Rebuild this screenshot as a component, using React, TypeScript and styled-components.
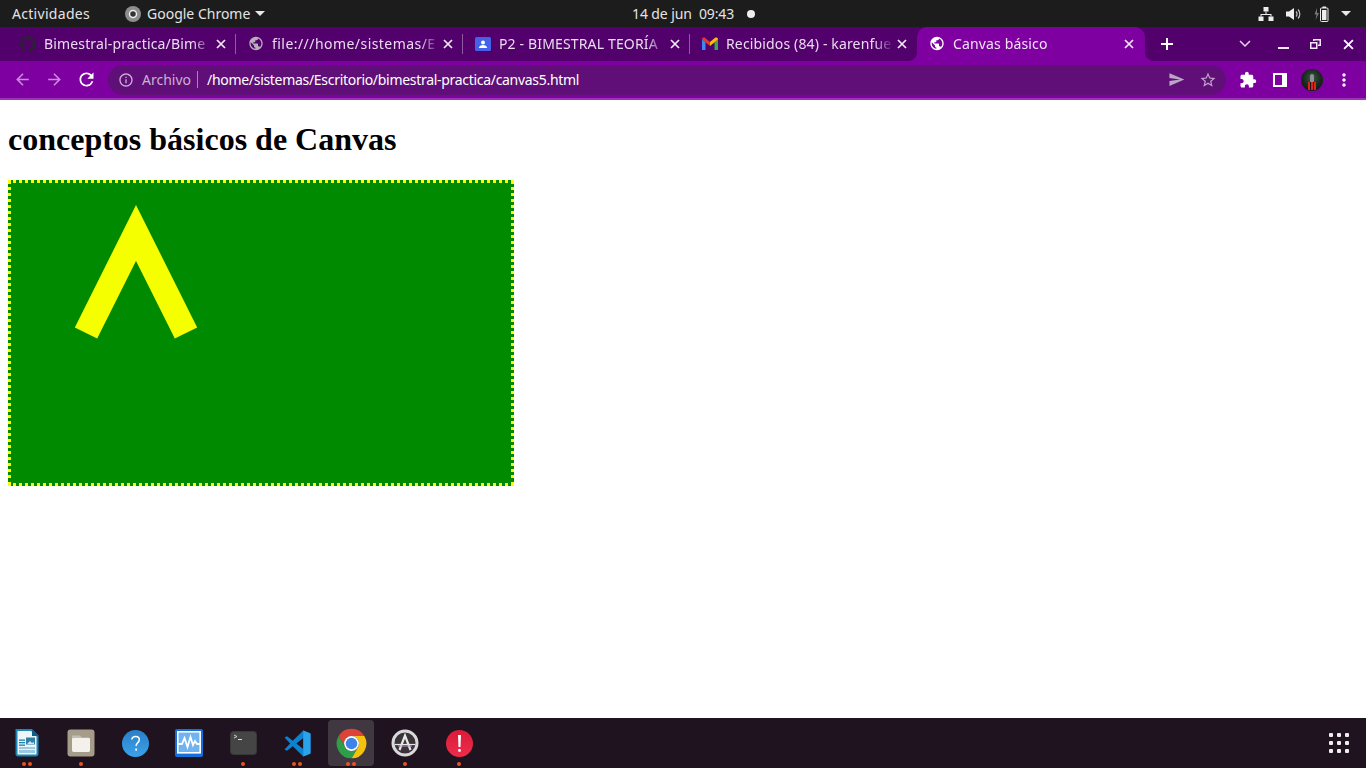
import { FC, ReactNode } from "react";
import styled, { createGlobalStyle } from "styled-components";
import { FaGithub } from "react-icons/fa";
import {
  MdArrowBack,
  MdArrowForward,
  MdExtension,
  MdInfoOutline,
  MdMoreVert,
  MdPublic,
  MdRefresh,
  MdSend,
  MdStarBorder,
} from "react-icons/md";

const UI_FONT = `"Noto Sans", "Open Sans", sans-serif`;

const GlobalStyle = createGlobalStyle`
  html, body {
    margin: 0;
    padding: 0;
    background: #fff;
  }
  * {
    box-sizing: border-box;
  }
`;

const Screen = styled.div`
  width: 1366px;
  height: 768px;
  display: flex;
  flex-direction: column;
  overflow: hidden;
  font-family: ${UI_FONT};
`;

/* gnome top bar */
const TopBar = styled.div`
  height: 27px;
  flex: none;
  background: #1c1c1c;
  color: #e4e4e4;
  font-size: 14px;
  display: grid;
  grid-template-columns: 620px 1fr auto;
  align-items: center;
  padding-left: 12px;
`;

const TopGroup = styled.div`
  display: flex;
  align-items: center;
`;

const Activities = styled.span`
  width: 113px;
  letter-spacing: 0.3px;
`;

const AppName = styled.span`
  margin-left: 6px;
`;

const Caret = styled.span<{ $left: number }>`
  width: 0;
  height: 0;
  margin-left: ${(p) => p.$left}px;
  border-left: 5px solid transparent;
  border-right: 5px solid transparent;
  border-top: 5px solid #e8e8e8;
`;

const Clock = styled.span`
  letter-spacing: -0.1px;
`;

const NotifyDot = styled.span`
  width: 8px;
  height: 8px;
  margin-left: 13px;
  border-radius: 50%;
  background: #eee;
`;

const Tray = styled.div`
  display: flex;
  align-items: center;
  gap: 12px;
  padding-right: 15px;
`;

/* chrome tab strip */
const TabStrip = styled.div`
  height: 34px;
  flex: none;
  background: #52006c;
  display: flex;
  align-items: stretch;
  padding-left: 9px;
  color: #e9dcee;
`;

const Tab = styled.div<{ $last?: boolean }>`
  position: relative;
  width: 227px;
  display: flex;
  align-items: center;
  padding: 0 10px 1px 12px;
  font-size: 14px;
  letter-spacing: 0.15px;
  color: #e9dcee;
  &:first-child {
    padding-left: 11px;
  }
  &::after {
    content: "";
    display: ${(p) => (p.$last ? "none" : "block")};
    position: absolute;
    right: 0;
    top: 7px;
    bottom: 7px;
    width: 1px;
    background: #8f5ba3;
  }
`;

const ActiveTab = styled.div`
  position: relative;
  width: 228px;
  display: flex;
  align-items: center;
  padding: 0 11px 1px 12px;
  font-size: 14px;
  letter-spacing: 0.15px;
  color: #f1e2f5;
  background: #7f00a1;
  border-radius: 10px 10px 0 0;
  &::before,
  &::after {
    content: "";
    position: absolute;
    bottom: 0;
    width: 8px;
    height: 8px;
  }
  &::before {
    left: -8px;
    background: radial-gradient(circle at 0 0, transparent 7.5px, #7f00a1 8px);
  }
  &::after {
    right: -8px;
    background: radial-gradient(circle at 100% 0, transparent 7.5px, #7f00a1 8px);
  }
`;

const TabIcon = styled.span`
  width: 16px;
  height: 16px;
  flex: none;
  display: flex;
  align-items: center;
  justify-content: center;
`;

const TabTitle = styled.span<{ $spread?: number }>`
  flex: 1;
  margin-left: 8px;
  white-space: nowrap;
  letter-spacing: ${(p) => p.$spread ?? 0.15}px;
  -webkit-mask-image: linear-gradient(90deg, #000 88%, transparent 100%);
  mask-image: linear-gradient(90deg, #000 88%, transparent 100%);
`;

const TabClose = styled.span`
  width: 10px;
  flex: none;
  margin-left: 3px;
  display: flex;
  color: #f4ecf7;
`;

const StripControls = styled.div`
  flex: 1;
  display: flex;
  align-items: center;
  color: #fff;
`;

const StripButton = styled.span<{ $width?: number; $gap?: number }>`
  width: ${(p) => p.$width ?? 32}px;
  margin-left: ${(p) => p.$gap ?? 0}px;
  display: flex;
  justify-content: center;
`;

/* chrome toolbar */
const Toolbar = styled.div`
  height: 39px;
  flex: none;
  background: #7f00a1;
  border-bottom: 2px solid #9a35b3;
  display: flex;
  align-items: center;
  padding: 0 0 0 6px;
  color: #fff;
`;

const NavButton = styled.span<{ $dim?: boolean }>`
  width: 32px;
  display: flex;
  justify-content: center;
  color: ${(p) => (p.$dim ? "#c68dd6" : "#fff")};
`;

const Omnibox = styled.div`
  width: 1118px;
  height: 30px;
  margin-left: 6px;
  margin-right: 6px;
  border-radius: 15px;
  background: #600f78;
  display: flex;
  align-items: center;
  padding: 0 2px 0 10px;
  font-size: 14px;
`;

const OriginLabel = styled.span`
  margin-left: 8px;
  color: #c9b2d2;
  padding-right: 6px;
  border-right: 1px solid #a987b5;
  line-height: 17px;
`;

const UrlText = styled.span`
  margin-left: 9px;
  color: #fff;
  flex: 1;
  letter-spacing: -0.3px;
`;

const OmniAction = styled.span`
  width: 32px;
  display: flex;
  justify-content: center;
  color: #bda5c6;
`;

const ToolButton = styled.span`
  width: 32px;
  display: flex;
  justify-content: center;
  align-items: center;
  color: #fff;
`;

const SidePanelIcon = styled.span`
  width: 14px;
  height: 14px;
  border: 2px solid #fff;
  border-right-width: 5px;
`;

const Avatar = styled.span`
  width: 22px;
  height: 22px;
  border-radius: 50%;
  background: radial-gradient(circle at 50% 40%, #3f5548 0%, #1a2a20 50%, #0c0c0c 100%);
  position: relative;
  overflow: hidden;
  &::before {
    content: "";
    position: absolute;
    left: 9px;
    top: 5px;
    width: 4px;
    height: 9px;
    border-radius: 2px;
    background: #8b9590;
  }
  &::after {
    content: "";
    position: absolute;
    left: 7px;
    bottom: 1px;
    width: 8px;
    height: 8px;
    background: repeating-linear-gradient(90deg, #d8261c 0 2px, #20100f 2px 3px);
  }
`;

/* page */
const Page = styled.main`
  flex: 1;
  background: #fff;
  padding: 0 8px;
  overflow: hidden;
`;

const Heading = styled.h1`
  margin: 21.44px 0;
  font: bold 32px/37px "Liberation Serif", "Times New Roman", serif;
  color: #000;
`;

const CanvasFrame = styled.svg`
  display: block;
  width: 506px;
  height: 306px;
  border: 3px dotted #ffff00;
  background: #008a00;
`;

/* dock */
const Dock = styled.div`
  height: 50px;
  flex: none;
  background: #1f1320;
  display: flex;
  align-items: center;
`;

const DockItem = styled.div<{ $active?: boolean }>`
  position: relative;
  width: 46px;
  height: 46px;
  margin-left: 8px;
  border-radius: 4px;
  display: flex;
  align-items: center;
  justify-content: center;
  background: ${(p) => (p.$active ? "#413741" : "transparent")};
  &:first-child {
    margin-left: 4px;
  }
`;

const DotRow = styled.div`
  position: absolute;
  bottom: 0;
  left: 0;
  right: 0;
  display: flex;
  justify-content: center;
  gap: 2px;
`;

const RunDot = styled.span`
  width: 4px;
  height: 4px;
  border-radius: 50%;
  background: #e9541f;
`;

const AppGrid = styled.div`
  margin-left: auto;
  margin-right: 17px;
  display: grid;
  grid-template-columns: repeat(3, 4px);
  gap: 4px;
`;

const GridDot = styled.span`
  width: 4px;
  height: 4px;
  border-radius: 1px;
  background: #eee;
`;

const CloseGlyph: FC<{ size?: number }> = ({ size = 10 }) => (
  <svg width={size} height={size} viewBox="0 0 10 10" fill="none" stroke="currentColor" strokeWidth="1.7">
    <path d="M1 1l8 8M9 1l-8 8" />
  </svg>
);

const ChromeLogo: FC<{ size: number }> = ({ size }) => (
  <svg width={size} height={size} viewBox="0 0 48 48">
    <path d="M4.08 12.5A23 23 0 0 1 43.92 12.5H24A11.5 11.5 0 0 0 14.04 29.75z" fill="#dd4437" />
    <path d="M43.92 12.5A23 23 0 0 1 24 47L33.96 29.75A11.5 11.5 0 0 0 24 12.5z" fill="#f4c20d" />
    <path d="M24 47A23 23 0 0 1 4.08 12.5L14.04 29.75A11.5 11.5 0 0 0 33.96 29.75z" fill="#2f9e49" />
    <circle cx="24" cy="24" r="11.5" fill="#fff" />
    <circle cx="24" cy="24" r="9" fill="#3d84ea" />
  </svg>
);

const NetworkIcon = () => (
  <svg width="16" height="14" viewBox="0 0 16 14" fill="#eee">
    <rect x="5.5" y="0" width="5" height="4.5" />
    <rect x="0.5" y="9.5" width="5" height="4.5" />
    <rect x="10.5" y="9.5" width="5" height="4.5" />
    <path d="M7.5 4.5h1V7H13.5v2.500h-1V8H3.5v1.500h-1V7H7.5z" />
  </svg>
);

const VolumeIcon = () => (
  <svg width="16" height="14" viewBox="0 0 16 14">
    <path d="M0 4.5h3L8 1v12L3 9.500H0z" fill="#eee" />
    <path d="M10 4.500a3.500 3.500 0 0 1 0 5M12 2.500a6.500 6.500 0 0 1 0 9" fill="none" stroke="#c4c4c4" strokeWidth="1.2" />
  </svg>
);

const BatteryIcon = () => (
  <svg width="15" height="16" viewBox="0 0 15 16">
    <path d="M3 2L0.500 8.500H2.500L1.500 14 5 7H3z" fill="#777" />
    <rect x="6.5" y="2" width="7.500" height="13.500" rx="1" fill="none" stroke="#eee" strokeWidth="1" />
    <rect x="8.5" y="0.500" width="3.500" height="1.500" fill="#eee" />
    <rect x="8" y="4" width="4.500" height="10" fill="#eee" />
  </svg>
);

const RestoreIcon = () => (
  <svg width="11" height="10" viewBox="0 0 11 10" fill="#f3e8f6">
    <path d="M3 0h8v7H8V5.500h1.500v-4h-5V2H3z" />
    <path d="M0 3h7.500v7H0zM1.500 4.500v4h4.500v-4z" fillRule="evenodd" />
  </svg>
);

const ClassroomIcon = () => (
  <svg width="16" height="16" viewBox="0 0 16 16">
    <rect width="16" height="14" y="1" rx="1.500" fill="#4462e8" />
    <circle cx="8" cy="6.500" r="2" fill="#fff" />
    <path d="M3.800 12c.3-2 2.200-3 4.200-3s3.900 1 4.200 3z" fill="#fff" />
  </svg>
);

const GmailIcon = () => (
  <svg width="16" height="13" viewBox="0 0 16 13">
    <path d="M0 2.500V13h3.500V5z" fill="#4285f4" />
    <path d="M16 2.500V13h-3.500V5z" fill="#34a853" />
    <path d="M0 2.500C0 .5 2 0 3.200 1L8 5l-.1 4L0 2.500z" fill="#e33a2c" />
    <path d="M8 5l4.800-4C14 0 16 .5 16 2.500L8 9z" fill="#fbbc05" />
  </svg>
);

const WriterIcon = () => (
  <svg width="24" height="28" viewBox="0 0 24 28">
    <path d="M1.500 1h15l6 6v18a1.500 1.500 0 0 1-1.500 1.500H3A1.500 1.500 0 0 1 1.500 25z" fill="#eef5f9" stroke="#1b86b8" strokeWidth="2" />
    <path d="M17 0l7 7h-7z" fill="#0f5f88" />
    <rect x="4" y="10.500" width="6" height="1.300" fill="#1b7fb0" />
    <rect x="4" y="13" width="6" height="1.300" fill="#1b7fb0" />
    <rect x="4" y="15.500" width="6" height="1.300" fill="#1b7fb0" />
    <rect x="11" y="8.500" width="9" height="7" fill="#2f7ea6" />
    <path d="M12 15l3-3 2 2 2-1v2z" fill="#cfe4ef" />
    <rect x="4" y="18" width="16" height="6" fill="#9cc9e0" />
    <rect x="4" y="20" width="16" height="1" fill="#e6f1f7" />
  </svg>
);

const FilesIcon = () => (
  <svg width="28" height="28" viewBox="0 0 28 28">
    <rect width="27" height="27" x="0.500" y="0.500" rx="3" fill="#a69c8a" />
    <path d="M5 6.500h8l2 2h6.500c1 0 1.500 1 1.500 2V21c0 1.500-1 2-2 2H7c-1.200 0-2-.8-2-2z" fill="#c4bdb0" />
    <path d="M5 10.500c0-1 .6-1.500 1.500-1.500h15c1 0 1.500.5 1.500 1.500V21c0 1.500-1 2-2 2H7c-1.200 0-2-.8-2-2z" fill="#f4f1ec" />
  </svg>
);

const HelpIcon = () => (
  <svg width="27" height="27" viewBox="0 0 27 27">
    <defs>
      <linearGradient id="helpFill" x1="0" y1="0" x2="0" y2="1">
        <stop offset="0" stopColor="#2a7fc8" />
        <stop offset="1" stopColor="#3aa2ea" />
      </linearGradient>
    </defs>
    <circle cx="13.500" cy="13.500" r="13.500" fill="url(#helpFill)" />
    <path d="M9.800 9.500c.3-2 1.900-3 3.800-3 2.200 0 3.700 1.300 3.700 3.200 0 2.900-3.200 3-3.200 6.300" fill="none" stroke="#fff" strokeWidth="1.500" />
    <rect x="13.300" y="18.500" width="1.700" height="2.200" fill="#fff" />
  </svg>
);

const MonitorIcon = () => (
  <svg width="28" height="28" viewBox="0 0 28 28">
    <rect width="28" height="28" rx="2" fill="#1670dc" />
    <rect x="2.800" y="2.800" width="22.400" height="21" fill="#6fb4f0" stroke="#fff" strokeWidth="1.600" />
    <path d="M3 15h4l2.500-6 3 9 3-10 2.500 8 2-4 2 3h3" fill="none" stroke="#fff" strokeWidth="1.800" />
  </svg>
);

const TerminalIcon = () => (
  <svg width="27" height="24" viewBox="0 0 27 24">
    <rect width="26" height="23" x="0.500" y="0.500" rx="3" fill="#454545" stroke="#383838" />
    <path d="M4 4l3 1.500L4 7" fill="none" stroke="#ddd" strokeWidth="0.900" />
    <rect x="8" y="8" width="4" height="1" fill="#ddd" />
  </svg>
);

const VsCodeIcon = () => (
  <svg width="27" height="27" viewBox="0 0 27 27">
    <path d="M19.300 0.500L8.800 10.800 3 6.300 0.500 7.500l5.700 6-5.700 6L3 20.700l5.800-4.500 10.500 10.300 7.200-3V3.500zM19.300 8v11l-7-5.500z" fill="#0a84d2" />
    <path d="M19.300 0.500l7.200 3v20l-7.200 3z" fill="#2aa3ec" />
  </svg>
);

const UpdaterIcon = () => (
  <svg width="28" height="28" viewBox="0 0 28 28">
    <circle cx="14" cy="14" r="12" fill="#3a343a" stroke="#d9d9d9" strokeWidth="3" />
    <path d="M8.500 21L14 6.500 19.500 21" fill="none" stroke="#e8e8e8" strokeWidth="2.200" />
    <path d="M4 15.500h20" stroke="#e8e8e8" strokeWidth="1.200" />
    <path d="M7 17h14" stroke="#b98fc8" strokeWidth="1" />
  </svg>
);

const AlertIcon = () => (
  <svg width="27" height="27" viewBox="0 0 27 27">
    <defs>
      <linearGradient id="alertFill" x1="0" y1="0" x2="0" y2="1">
        <stop offset="0" stopColor="#d81c38" />
        <stop offset="1" stopColor="#ee2c4c" />
      </linearGradient>
    </defs>
    <circle cx="13.500" cy="13.500" r="13.500" fill="url(#alertFill)" />
    <path d="M12 5h3l-.5 12h-2z" fill="#fff" />
    <rect x="12.200" y="19" width="2.600" height="2.800" rx="0.800" fill="#fff" />
  </svg>
);

interface TabData {
  title: string;
  icon: ReactNode;
  spread?: number;
  last?: boolean;
}

const tabs: TabData[] = [
  { title: "Bimestral-practica/Bime", icon: <FaGithub size={16} color="#2a2233" /> },
  { title: "file:///home/sistemas/E", icon: <MdPublic size={17} color="#b7adbb" />, spread: 0.45 },
  { title: "P2 - BIMESTRAL TEORÍA", icon: <ClassroomIcon /> },
  { title: "Recibidos (84) - karenfue", icon: <GmailIcon />, last: true },
];

const dockApps: { icon: ReactNode; dots: number; active?: boolean }[] = [
  { icon: <WriterIcon />, dots: 2 },
  { icon: <FilesIcon />, dots: 1 },
  { icon: <HelpIcon />, dots: 0 },
  { icon: <MonitorIcon />, dots: 0 },
  { icon: <TerminalIcon />, dots: 1 },
  { icon: <VsCodeIcon />, dots: 2 },
  { icon: <ChromeLogo size={31} />, dots: 2, active: true },
  { icon: <UpdaterIcon />, dots: 1 },
  { icon: <AlertIcon />, dots: 1 },
];

const App: FC = () => {
  return (
    <Screen>
      <GlobalStyle />
      <TopBar>
        <TopGroup>
          <Activities>Actividades</Activities>
          <svg width="16" height="16" viewBox="0 0 16 16">
            <circle cx="8" cy="8" r="8" fill="#8d8d8d" />
            <circle cx="8" cy="8" r="3.500" fill="#333" stroke="#eee" strokeWidth="1.500" />
          </svg>
          <AppName>Google Chrome</AppName>
          <Caret $left={5} />
        </TopGroup>
        <TopGroup>
          <Clock>14 de jun&nbsp; 09:43</Clock>
          <NotifyDot />
        </TopGroup>
        <Tray>
          <NetworkIcon />
          <VolumeIcon />
          <BatteryIcon />
          <Caret $left={0} />
        </Tray>
      </TopBar>

      <TabStrip>
        {tabs.map((tab) => (
          <Tab key={tab.title} $last={tab.last}>
            <TabIcon>{tab.icon}</TabIcon>
            <TabTitle $spread={tab.spread}>{tab.title}</TabTitle>
            <TabClose>
              <CloseGlyph />
            </TabClose>
          </Tab>
        ))}
        <ActiveTab>
          <TabIcon>
            <MdPublic size={17} color="#fff" />
          </TabIcon>
          <TabTitle>Canvas básico</TabTitle>
          <TabClose>
            <CloseGlyph />
          </TabClose>
        </ActiveTab>
        <StripControls>
          <StripButton $width={44}>
            <svg width="14" height="14" viewBox="0 0 14 14" stroke="#fff" strokeWidth="2">
              <path d="M7 1v12M1 7h12" />
            </svg>
          </StripButton>
          <StripButton $gap={40}>
            <svg width="12" height="8" viewBox="0 0 12 8" fill="none" stroke="#e6d6ec" strokeWidth="1.500">
              <path d="M1 1l5 5 5-5" />
            </svg>
          </StripButton>
          <StripButton $gap={6}>
            <svg width="11" height="10" viewBox="0 0 11 10" fill="#f3e8f6">
              <rect y="8" width="11" height="2" />
            </svg>
          </StripButton>
          <StripButton>
            <RestoreIcon />
          </StripButton>
          <StripButton $gap={1}>
            <CloseGlyph size={11} />
          </StripButton>
        </StripControls>
      </TabStrip>

      <Toolbar>
        <NavButton $dim>
          <MdArrowBack size={19} />
        </NavButton>
        <NavButton $dim>
          <MdArrowForward size={19} />
        </NavButton>
        <NavButton>
          <MdRefresh size={21} />
        </NavButton>
        <Omnibox>
          <MdInfoOutline size={16} color="#c9b2d2" />
          <OriginLabel>Archivo</OriginLabel>
          <UrlText>/home/sistemas/Escritorio/bimestral-practica/canvas5.html</UrlText>
          <OmniAction>
            <MdSend size={17} />
          </OmniAction>
          <OmniAction>
            <MdStarBorder size={18} />
          </OmniAction>
        </Omnibox>
        <ToolButton>
          <MdExtension size={18} />
        </ToolButton>
        <ToolButton>
          <SidePanelIcon />
        </ToolButton>
        <ToolButton>
          <Avatar />
        </ToolButton>
        <ToolButton>
          <MdMoreVert size={20} />
        </ToolButton>
      </Toolbar>

      <Page>
        <Heading>conceptos básicos de Canvas</Heading>
        <CanvasFrame viewBox="0 0 500 300">
          <polyline points="75,150 125,50 175,150" fill="none" stroke="#f6ff00" strokeWidth="25" />
        </CanvasFrame>
      </Page>

      <Dock>
        {dockApps.map((app, i) => (
          <DockItem key={i} $active={app.active}>
            {app.icon}
            <DotRow>
              {Array.from({ length: app.dots }).map((_, d) => (
                <RunDot key={d} />
              ))}
            </DotRow>
          </DockItem>
        ))}
        <AppGrid>
          {Array.from({ length: 9 }).map((_, i) => (
            <GridDot key={i} />
          ))}
        </AppGrid>
      </Dock>
    </Screen>
  );
};

export default App;
